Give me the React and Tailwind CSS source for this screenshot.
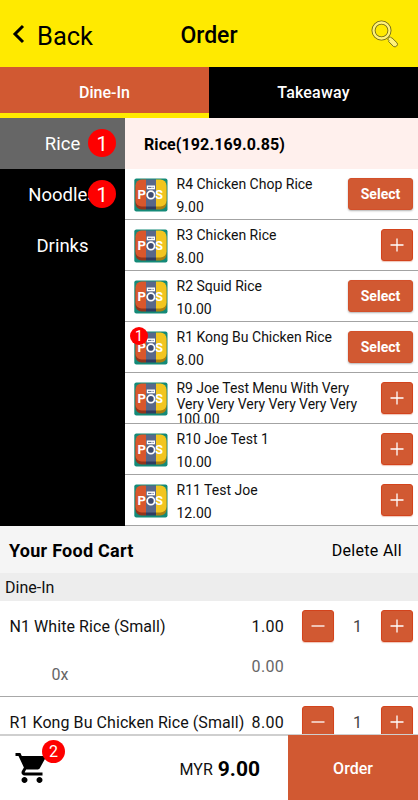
import React from 'react'

const CATEGORIES = [
  { name: 'Rice', count: 1, active: true },
  { name: 'Noodles', count: 1 },
  { name: 'Drinks' },
]

const MENU = [
  { name: 'R4 Chicken Chop Rice', price: '9.00', select: true },
  { name: 'R3 Chicken Rice', price: '8.00' },
  { name: 'R2 Squid Rice', price: '10.00', select: true },
  { name: 'R1 Kong Bu Chicken Rice', price: '8.00', select: true, count: 1 },
  { name: 'R9 Joe Test Menu With Very Very Very Very Very Very Very', price: '100.00', long: true },
  { name: 'R10 Joe Test 1', price: '10.00' },
  { name: 'R11 Test Joe', price: '12.00' },
]

const CART = [
  { name: 'N1 White Rice (Small)', price: '1.00', qty: 1, extra: { qty: '0x', price: '0.00' } },
  { name: 'R1 Kong Bu Chicken Rice (Small)', price: '8.00', qty: 1 },
]

function SearchIcon() {
  return (
    <svg width="30" height="30" viewBox="0 0 30 30" className="block">
      <path d="M17.6 19 L20.1 16.6 L21.5 18 L22 17.9 L27.1 22.9 Q28.2 24.6 26.7 26 Q25.2 27.5 23.5 26.5 L18.6 21.5 L19 20.5 Z" fill="#fff27a" stroke="#6b6418" strokeWidth="0.9" strokeLinejoin="round" />
      <circle cx="11.5" cy="10.5" r="8" fill="none" stroke="#6b6418" strokeWidth="4" />
      <circle cx="11.5" cy="10.5" r="8" fill="none" stroke="#fff27a" strokeWidth="2.3" />
    </svg>
  )
}

function PosIcon() {
  return (
    <svg width="34" height="34" viewBox="0 0 34 34" className="block">
      <defs>
        <clipPath id="tile"><rect x="1.5" y="1.5" width="31" height="27" rx="6" /></clipPath>
        <clipPath id="base"><rect x="1.5" y="4" width="31" height="27.5" rx="6" /></clipPath>
      </defs>
      <rect x="0.3" y="0.5" width="33.2" height="33" rx="2" fill="#148a78" />
      <g clipPath="url(#base)">
        <rect width="12" height="34" fill="#93351c" />
        <rect x="12" width="10" height="34" fill="#303c60" />
        <rect x="22" width="12" height="34" fill="#a98012" />
      </g>
      <g clipPath="url(#tile)">
        <rect width="12" height="30" fill="#d9572c" />
        <rect x="12" width="10" height="30" fill="#596889" />
        <rect x="22" width="12" height="30" fill="#f2c51f" />
      </g>
      <rect x="12.8" y="7.5" width="8.2" height="3.8" fill="#fff" />
      <path d="M14 9.4h3.5M18.5 9.4h1.2" stroke="#596889" strokeWidth="1" />
      <circle cx="16.9" cy="16.9" r="3.7" fill="#3f4c70" stroke="#fff" strokeWidth="1.8" />
      <text x="3.6" y="21.4" fontSize="13" fontWeight="700" fill="#fff">P</text>
      <text x="21" y="21.4" fontSize="13" fontWeight="700" fill="#fff">S</text>
    </svg>
  )
}

function CartIcon() {
  return (
    <svg width="36" height="36" viewBox="0 0 24 24" className="block">
      <path d="M7 18c-1.1 0-1.99.9-1.99 2S5.9 22 7 22s2-.9 2-2-.9-2-2-2zM1 2v2h2l3.6 7.59-1.35 2.45c-.16.28-.25.61-.25.96 0 1.1.9 2 2 2h12v-2H7.42c-.14 0-.25-.11-.25-.25l.03-.12.9-1.63h7.45c.75 0 1.41-.41 1.75-1.03l3.58-6.49c.08-.14.12-.31.12-.48 0-.55-.45-1-1-1H5.21l-.94-2H1zm16 16c-1.1 0-1.99.9-1.99 2s.89 2 1.99 2 2-.9 2-2-.9-2-2-2z" />
    </svg>
  )
}

function SquareButton({ minus }) {
  return (
    <button type="button" className="flex h-8 w-8 shrink-0 items-center justify-center rounded-[3px] border border-[#d3431c] bg-[#d15932] shadow-[0_1px_1px_rgba(209,89,50,0.35)]">
      <svg width="14" height="14" viewBox="0 0 14 14" stroke="#fff" strokeWidth="1.3">
        <path d={minus ? 'M0.5 7h13' : 'M0.5 7h13M7 0.5v13'} />
      </svg>
    </button>
  )
}

function MenuRow({ item }) {
  return (
    <li className="flex h-[51px] items-start overflow-hidden border-b border-[#a3a3a3] pr-[5px] pl-[9px]">
      <div className="relative mt-[8.5px] shrink-0">
        <PosIcon />
        {item.count && (
          <span className="absolute -top-1 -left-1 flex h-[18px] w-[18px] items-center justify-center rounded-full bg-[#fe0000] pt-px text-[14px] text-white">
            {item.count}
          </span>
        )}
      </div>
      <div className="ml-[8.5px] min-w-0 flex-1 pt-[7px] text-[14px] leading-4">
        <p className={item.long ? 'w-[190px] tracking-[-0.07px]' : 'whitespace-nowrap'}>{item.name}</p>
        <p className={item.long ? '-mt-px' : 'mt-[7px]'}>{item.price}</p>
      </div>
      <div className="mt-[9px] shrink-0">
        {item.select ? (
          <button type="button" className="h-8 w-[65px] rounded-[3px] border border-[#d3502a] bg-[#d15932] pt-px text-[14px] font-bold text-white shadow-[0_1px_2px_rgba(0,0,0,0.3)]">
            Select
          </button>
        ) : (
          <SquareButton />
        )}
      </div>
    </li>
  )
}

function CartRow({ item }) {
  return (
    <li className="h-24 border-b border-[#a8a8a8] pt-[9px] pr-[5px] pl-[9.5px] text-[16px]">
      <div className="flex h-8 items-center">
        <span className="flex-1 pt-[2px] tracking-[0.07px] whitespace-nowrap">{item.name}</span>
        <span className="mr-[18px] pt-[2px] tracking-[0.3px]">{item.price}</span>
        <SquareButton minus />
        <span className="w-[47px] pt-[2px] text-center text-[#444]">{item.qty}</span>
        <SquareButton />
      </div>
      {item.extra && (
        <div className="flex text-[#666]">
          <span className="ml-[42px] flex-1 pt-[21px]">{item.extra.qty}</span>
          <span className="mr-[129px] pt-[13px] tracking-[0.3px]">{item.extra.price}</span>
        </div>
      )}
    </li>
  )
}

export default function App() {
  return (
    <div className="flex h-[800px] w-[418px] flex-col overflow-hidden bg-white font-['Roboto',sans-serif] text-[#111]">
      <header className="grid h-[67px] shrink-0 grid-cols-3 items-center bg-[#ffea00] pt-[3px] text-black">
        <button type="button" className="flex items-center pl-[12px] text-left text-[25.5px]">
          <svg width="13" height="20" viewBox="0 0 13 20" fill="none" stroke="#000" strokeWidth="3" className="-mt-0.5">
            <path d="M11 2 L3 10 L11 18" />
          </svg>
          <span className="ml-[12px] pt-px leading-8">Back</span>
        </button>
        <h1 className="pt-[2px] text-center text-[23px] font-medium">Order</h1>
        <div className="flex justify-end pr-[18px]"><SearchIcon /></div>
      </header>

      <nav className="grid h-[51px] shrink-0 grid-cols-2 text-[16px] font-medium text-white">
        <button type="button" className="border-b-[5px] border-[#ffea00] bg-[#d15932] pt-[5px]">Dine-In</button>
        <button type="button" className="bg-black pt-px tracking-[0.2px]">Takeaway</button>
      </nav>

      <main className="flex h-[408px] shrink-0">
        <ul className="w-[125px] shrink-0 bg-black text-[18.5px] text-white">
          {CATEGORIES.map(c => (
            <li key={c.name} className={`relative flex h-[51px] items-center justify-center pt-[2px] ${c.active ? 'bg-[#666]' : ''}`}>
              {c.name}
              {c.count && (
                <span className="absolute top-[11px] right-[9px] flex h-7 w-7 items-center justify-center rounded-full bg-[#fe0000] pt-px text-[20px]">
                  {c.count}
                </span>
              )}
            </li>
          ))}
        </ul>
        <div className="min-w-0 flex-1">
          <h2 className="flex h-[51px] items-center bg-[#fff0ed] pt-[2px] pl-[19px] text-[16px] font-bold tracking-[0.1px] text-black">Rice(192.169.0.85)</h2>
          <ul>
            {MENU.map(item => <MenuRow key={item.name} item={item} />)}
          </ul>
        </div>
      </main>

      <section className="flex min-h-0 flex-1 flex-col overflow-hidden">
        <div className="flex h-[47px] shrink-0 items-center justify-between bg-[#f5f5f5] pt-px pr-4 pl-[9px] text-black">
          <h2 className="text-[18px] font-bold tracking-[0.25px]">Your Food Cart</h2>
          <button type="button" className="pt-[2px] text-[16px] tracking-[0.3px]">Delete All</button>
        </div>
        <h3 className="flex h-7 shrink-0 items-center bg-[#ededed] pt-[2px] pl-[5px] text-[16px]">Dine-In</h3>
        <ul>
          {CART.map(item => <CartRow key={item.name} item={item} />)}
        </ul>
      </section>

      <footer className="flex h-[66px] shrink-0 border-t-2 border-[#cfcfcf] bg-white">
        <div className="relative pt-[14px] pl-[14px] text-black">
          <CartIcon />
          <span className="absolute top-[4px] left-[42px] flex h-[23px] w-[23px] items-center justify-center rounded-full bg-[#fe0000] pt-px text-[16px] text-white">2</span>
        </div>
        <div className="flex flex-1 items-center justify-end pt-[3px] pr-[28px] text-[16px]">
          MYR <strong className="ml-[5px] text-[21px] font-bold text-black">9.00</strong>
        </div>
        <button type="button" className="-mt-px w-[130px] bg-[#d15932] pt-[3px] text-[16px] font-medium text-white">Order</button>
      </footer>
    </div>
  )
}
